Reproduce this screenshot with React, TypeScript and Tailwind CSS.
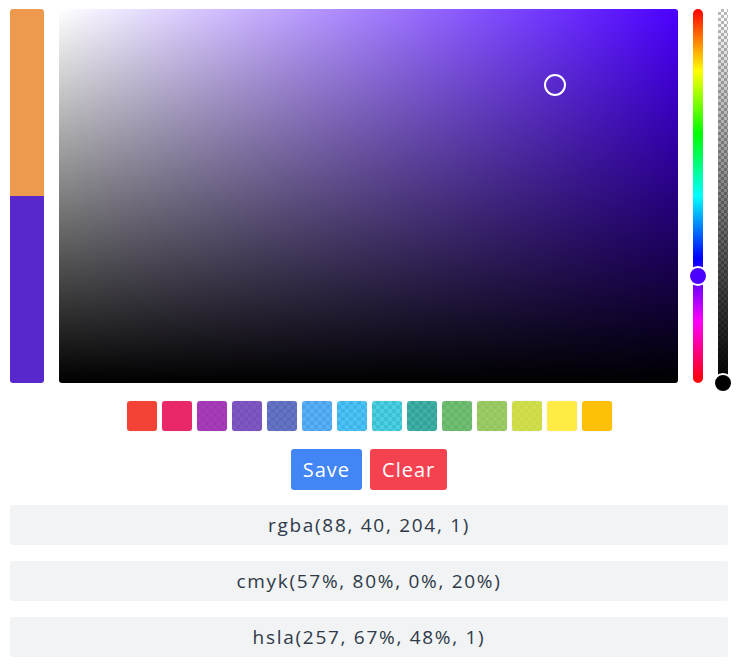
import React from "react";

const swatches = [
  "rgba(244,67,54,1)",
  "rgba(233,30,99,0.95)",
  "rgba(156,39,176,0.9)",
  "rgba(103,58,183,0.85)",
  "rgba(63,81,181,0.8)",
  "rgba(33,150,243,0.75)",
  "rgba(3,169,244,0.7)",
  "rgba(0,188,212,0.7)",
  "rgba(0,150,136,0.75)",
  "rgba(76,175,80,0.8)",
  "rgba(139,195,74,0.85)",
  "rgba(205,220,57,0.9)",
  "rgba(255,235,59,0.95)",
  "rgba(255,193,7,1)",
];

const values = ["rgba(88, 40, 204, 1)", "cmyk(57%, 80%, 0%, 20%)", "hsla(257, 67%, 48%, 1)"];

export default function App() {
  return (
    <div className="w-[740px] h-[667px] bg-white pt-[9px] pl-[10px] pr-[12px] font-['Open_Sans','Liberation_Sans',sans-serif]">
      <div className="flex h-[374px] gap-[15px]">
        <div className="w-[34px] flex flex-col rounded-[3px] overflow-hidden">
          <div className="flex-1 bg-[#ed994e]" />
          <div className="flex-1 bg-[#5828cc]" />
        </div>
        <div className="relative flex-1 rounded-[3px] bg-[image:linear-gradient(to_top,#000,transparent),linear-gradient(to_right,#fff,#4b00ff)]">
          <div className="absolute left-[485px] top-[65px] w-[22px] h-[22px] rounded-full border-2 border-white" />
        </div>
        <div className="relative w-[10px] rounded-full bg-[image:linear-gradient(to_bottom,#f00,#ff0,#0f0,#0ff,#00f,#f0f,#f00)]">
          <div className="absolute left-[-5px] top-[257px] w-[20px] h-[20px] rounded-full bg-[#4b00ff] border-2 border-white" />
        </div>
        <div className="relative w-[10px] bg-[image:linear-gradient(to_bottom,transparent,#000),repeating-conic-gradient(#bbb_0_25%,#fff_0_50%)] bg-[length:100%_100%,6px_6px]">
          <div className="absolute left-[-5px] top-[364px] w-[20px] h-[20px] rounded-full bg-black border-2 border-white" />
        </div>
      </div>

      <div className="flex justify-center gap-[5px] mt-[18px]">
        {swatches.map((c, i) => (
          <div
            key={i}
            className="w-[30px] h-[30px] rounded-[3px] overflow-hidden shadow-[0_0_1px_rgba(0,0,0,0.3)] bg-[image:repeating-conic-gradient(#ccc_0_25%,#fff_0_50%)] bg-[length:8px_8px]"
          >
            <div className="w-full h-full" style={{ background: c }} />
          </div>
        ))}
      </div>

      <div className="flex justify-center gap-[8px] mt-[18px]">
        <button className="h-[41px] px-[12px] rounded-[3px] bg-[#4285f4] text-white text-[20px] tracking-[0.05em] leading-none">
          Save
        </button>
        <button className="h-[41px] px-[12px] rounded-[3px] bg-[#f44250] text-white text-[20px] tracking-[0.05em] leading-none">
          Clear
        </button>
      </div>

      <div className="flex flex-col gap-[16px] mt-[15px]">
        {values.map((v) => (
          <div
            key={v}
            className="h-[40px] rounded-[3px] bg-[#f1f3f5] flex items-center justify-center text-[19px] tracking-[0.09em] text-[#2f3a47]"
          >
            {v}
          </div>
        ))}
      </div>
    </div>
  );
}
